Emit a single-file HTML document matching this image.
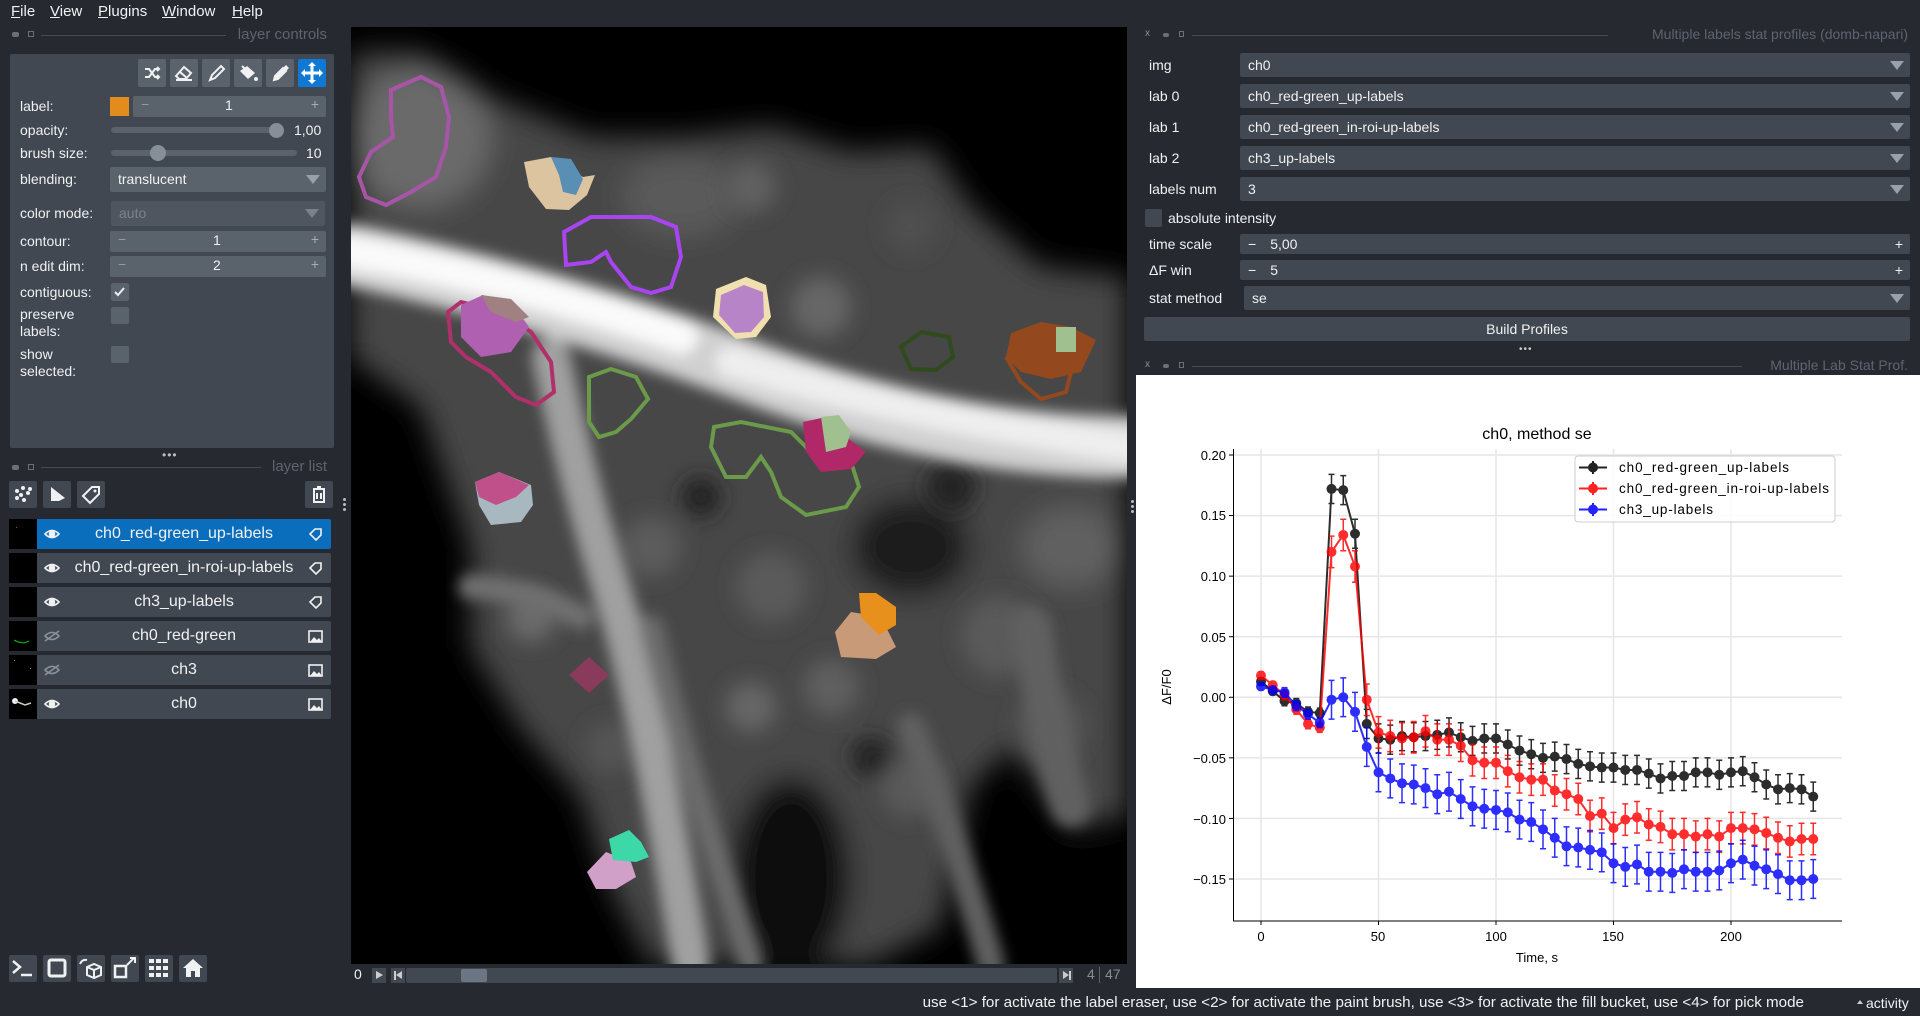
<!DOCTYPE html>
<html><head><meta charset="utf-8">
<style>
*{margin:0;padding:0;box-sizing:border-box}
body{width:1920px;height:1016px;background:#262930;font-family:"Liberation Sans",sans-serif;color:#f0f1f2;position:relative;overflow:hidden;font-size:14px}
.a{position:absolute}
.menu span{position:absolute;top:3px;font-size:15px}
.menu u{text-decoration:underline}
.ttl{position:absolute;font-size:14px;color:#5d6470;white-space:nowrap}
.ln{position:absolute;height:1px;background:#454b55}
.lbl{position:absolute;left:20px;font-size:14px;line-height:17px}
.w{position:absolute;background:#5a626c;border-radius:2px}
.tb{position:absolute;top:59px;width:28px;height:28px;background:#5a626c;border-radius:2px}
.row{position:absolute;left:37px;width:294px;height:30px;background:#414851;border-radius:0 2px 2px 0;font-size:16px;text-align:center;line-height:30px}
.th{position:absolute;left:9px;width:28px;height:30px;background:#000}
.bb{position:absolute;width:28px;height:27px;background:#414851;border-radius:2px}
.rl{position:absolute;left:1149px;font-size:14px}
.cb{position:absolute;left:1240px;width:670px;height:24px;background:#414851;border-radius:2px;font-size:14px;line-height:24px;padding-left:8px}
.arr{position:absolute;right:6px;top:8px;width:0;height:0;border-left:7px solid transparent;border-right:7px solid transparent;border-top:9px solid #9aa0a8}
</style></head><body>
<div class="menu">
<span style="left:11px"><u>F</u>ile</span><span style="left:50px"><u>V</u>iew</span><span style="left:98px"><u>P</u>lugins</span><span style="left:162px"><u>W</u>indow</span><span style="left:232px"><u>H</u>elp</span>
</div>
<div class="a" style="left:12px;top:32px;width:7px;height:5px;background:#6a707a;border-radius:2px"></div>
<div class="a" style="left:28px;top:31px;width:6px;height:6px;border:1px solid #6a707a"></div>
<div class="ln" style="left:41px;top:35px;width:185px"></div>
<div class="ttl" style="right:1593px;top:26px;font-size:15px">layer controls</div>
<div class="a" style="left:10px;top:54px;width:324px;height:394px;background:#414851;border-radius:2px"></div>
<div class="tb" style="left:138px"><svg width="28" height="28"><path d="M7 10h4l6 8h4M7 18h4l6-8h4M19 8l2 2-2 2M19 16l2 2-2 2" stroke="#f0f1f2" stroke-width="2" fill="none"/></svg></div>
<div class="tb" style="left:170px"><svg width="28" height="28"><path d="M6 17l8-9 7 6-5 6H9z" stroke="#f0f1f2" stroke-width="2" fill="none"/><path d="M6 21h16" stroke="#f0f1f2" stroke-width="2"/><path d="M10 13l7 6" stroke="#f0f1f2" stroke-width="2"/></svg></div>
<div class="tb" style="left:202px"><svg width="28" height="28"><path d="M8 21l2-5 9-9 3 3-9 9z" stroke="#f0f1f2" stroke-width="2" fill="none"/></svg></div>
<div class="tb" style="left:234px"><svg width="28" height="28"><path d="M6 12l7-5 8 7-7 6z" fill="#f0f1f2"/><path d="M8 7l5 5" stroke="#f0f1f2" stroke-width="2"/><circle cx="22" cy="20" r="2" fill="#f0f1f2"/></svg></div>
<div class="tb" style="left:266px"><svg width="28" height="28"><path d="M8 21l1-4 8-8 3 3-8 8z" stroke="#f0f1f2" stroke-width="2" fill="#f0f1f2"/><path d="M17 9l3-3 3 3-3 3" fill="#f0f1f2"/></svg></div>
<div class="tb" style="left:298px;background:#0f78d4"><svg width="28" height="28"><path d="M14 5v18M5 14h18" stroke="#fff" stroke-width="3"/><path d="M14 3l-4 4h8zM14 25l-4-4h8zM3 14l4-4v8zM25 14l-4-4v8z" fill="#fff"/></svg></div>
<div class="lbl" style="top:98px">label:</div>
<div class="a" style="left:110px;top:97px;width:19px;height:19px;background:#e38b1d"></div>
<div class="w" style="left:133px;top:96px;width:193px;height:21px"><span class="a" style="left:8px;top:0;color:#99a">−</span><span class="a" style="left:92px;top:1px">1</span><span class="a" style="right:7px;top:0;color:#aab">+</span></div>
<div class="lbl" style="top:122px">opacity:</div>
<div class="a" style="left:111px;top:127px;width:172px;height:6px;background:#5a626c;border-radius:3px"></div>
<div class="a" style="left:269px;top:123px;width:15px;height:15px;background:#868e98;border-radius:50%"></div>
<div class="a" style="left:294px;top:122px;font-size:14px">1,00</div>
<div class="lbl" style="top:145px">brush size:</div>
<div class="a" style="left:111px;top:150px;width:186px;height:6px;background:#5a626c;border-radius:3px"></div>
<div class="a" style="left:150px;top:145px;width:16px;height:16px;background:#868e98;border-radius:50%"></div>
<div class="a" style="left:306px;top:145px">10</div>
<div class="lbl" style="top:171px">blending:</div>
<div class="w" style="left:110px;top:167px;width:216px;height:25px;font-size:14px;line-height:25px;padding-left:8px">translucent<div class="arr"></div></div>
<div class="lbl" style="top:205px">color mode:</div>
<div class="w" style="left:111px;top:201px;width:214px;height:25px;background:#4f565f;color:#7b828b;line-height:25px;padding-left:8px">auto<div class="arr" style="border-top-color:#7b828b"></div></div>
<div class="lbl" style="top:233px">contour:</div>
<div class="w" style="left:110px;top:231px;width:216px;height:21px"><span class="a" style="left:8px;color:#99a">−</span><span class="a" style="left:103px;top:1px">1</span><span class="a" style="right:7px;color:#aab">+</span></div>
<div class="lbl" style="top:258px">n edit dim:</div>
<div class="w" style="left:110px;top:256px;width:216px;height:21px"><span class="a" style="left:8px;color:#99a">−</span><span class="a" style="left:103px;top:1px">2</span><span class="a" style="right:7px;color:#aab">+</span></div>
<div class="lbl" style="top:284px">contiguous:</div>
<div class="w" style="left:111px;top:283px;width:18px;height:18px"><svg width="18" height="18"><path d="M4 9l3 3 6-7" stroke="#eee" stroke-width="2" fill="none"/></svg></div>
<div class="lbl" style="top:306px">preserve<br>labels:</div>
<div class="w" style="left:111px;top:307px;width:18px;height:17px"></div>
<div class="lbl" style="top:346px">show<br>selected:</div>
<div class="w" style="left:111px;top:346px;width:18px;height:17px"></div>
<div class="a" style="left:162px;top:448px;color:#bbb;font-size:12px;letter-spacing:1px">•••</div>
<div class="a" style="left:12px;top:465px;width:7px;height:5px;background:#6a707a;border-radius:2px"></div>
<div class="a" style="left:28px;top:464px;width:6px;height:6px;border:1px solid #6a707a"></div>
<div class="ln" style="left:41px;top:467px;width:220px"></div>
<div class="ttl" style="right:1593px;top:458px;font-size:15px">layer list</div>
<div class="bb" style="left:9px;top:481px"><svg width="28" height="27"><g fill="#f0f1f2"><circle cx="8" cy="10" r="2"/><circle cx="14" cy="7" r="2"/><circle cx="19" cy="12" r="2"/><circle cx="12" cy="14" r="2"/><circle cx="8" cy="17" r="2"/><circle cx="15" cy="19" r="2"/><circle cx="21" cy="8" r="2"/></g></svg></div>
<div class="bb" style="left:43px;top:481px"><svg width="28" height="27"><path d="M8 6l14 11-6 3H8z" fill="#f0f1f2"/></svg></div>
<div class="bb" style="left:77px;top:481px"><svg width="28" height="27"><path d="M6 15l9-9h7v7l-9 9z" stroke="#f0f1f2" stroke-width="2" fill="none"/><circle cx="18" cy="10" r="1.5" fill="#f0f1f2"/></svg></div>
<div class="bb" style="left:305px;top:481px"><svg width="28" height="27"><path d="M8 8h12M12 6h4M9 9v12h10V9M12 12v6M16 12v6" stroke="#f0f1f2" stroke-width="2" fill="none"/></svg></div>
<div class="a" style="left:343px;top:498px;width:3px;height:3px;background:#bbb;border-radius:50%;box-shadow:0 5px 0 #bbb,0 10px 0 #bbb"></div>

<div class="th" style="top:519px"></div><div class="row" style="top:519px;background:#0a6ebd">ch0_red-green_up-labels</div>
<div class="th" style="top:553px"></div><div class="row" style="top:553px">ch0_red-green_in-roi-up-labels</div>
<div class="th" style="top:587px"></div><div class="row" style="top:587px">ch3_up-labels</div>
<div class="th" style="top:621px"></div><div class="row" style="top:621px">ch0_red-green</div>
<div class="th" style="top:655px"></div><div class="row" style="top:655px">ch3</div>
<div class="th" style="top:689px"></div><div class="row" style="top:689px">ch0</div>
<svg class="a" style="left:0;top:0" width="340" height="720">
<g fill="none" stroke-width="1.6">
<g stroke="#f0f1f2"><path d="M45 534q7-7 14 0q-7 7-14 0z"/><circle cx="52" cy="534" r="2.5" fill="#f0f1f2"/>
<path d="M45 568q7-7 14 0q-7 7-14 0z"/><circle cx="52" cy="568" r="2.5" fill="#f0f1f2"/>
<path d="M45 602q7-7 14 0q-7 7-14 0z"/><circle cx="52" cy="602" r="2.5" fill="#f0f1f2"/>
<path d="M45 704q7-7 14 0q-7 7-14 0z"/><circle cx="52" cy="704" r="2.5" fill="#f0f1f2"/></g>
<g stroke="#8a9098"><path d="M45 636q7-7 14 0q-7 7-14 0zM45 641l14-10"/><path d="M45 670q7-7 14 0q-7 7-14 0zM45 675l14-10"/></g>
<g stroke="#f0f1f2"><path d="M310 534l5-5h6v6l-5 5z"/><path d="M310 568l5-5h6v6l-5 5z"/><path d="M310 602l5-5h6v6l-5 5z"/>
<rect x="309" y="631" width="13" height="11"/><rect x="309" y="665" width="13" height="11"/><rect x="309" y="699" width="13" height="11"/></g>
</g>
<g fill="#f0f1f2"><path d="M310 642l4-5 3 3 2-2 3 4z"/><path d="M310 676l4-5 3 3 2-2 3 4z"/><path d="M310 710l4-5 3 3 2-2 3 4z"/></g>
<rect x="16" y="527" width="1" height="1" fill="#c33"/>
<path d="M14 640l4 2 6 1 5-2" stroke="#0c0" stroke-width="1" fill="none"/>
<g fill="#777"><rect x="14" y="660" width="1" height="1"/><rect x="30" y="668" width="1" height="1"/></g>
<circle cx="15" cy="701" r="3" fill="#eee"/><path d="M15 701l10 4 6-2" stroke="#ccc" stroke-width="1.5" fill="none"/>
</svg>
<div class="bb" style="left:9px;top:955px"><svg width="28" height="27"><path d="M4 6l7 6-7 6M12 20h11" stroke="#f0f1f2" stroke-width="2.5" fill="none"/></svg></div>
<div class="bb" style="left:43px;top:955px"><svg width="28" height="27"><rect x="6" y="5" width="16" height="16" rx="2" stroke="#f0f1f2" stroke-width="3" fill="none"/></svg></div>
<div class="bb" style="left:77px;top:955px"><svg width="28" height="27"><path d="M10 12l7-3 7 3v8l-7 3-7-3z M10 12l7 3 7-3M17 15v8" stroke="#f0f1f2" stroke-width="2" fill="none"/><path d="M3 9q2-5 7-4" stroke="#f0f1f2" stroke-width="2" fill="none"/></svg></div>
<div class="bb" style="left:111px;top:955px"><svg width="28" height="27"><rect x="4" y="11" width="11" height="11" stroke="#f0f1f2" stroke-width="2.5" fill="none"/><path d="M16 10l7-7M19 3h5v5" stroke="#f0f1f2" stroke-width="2" fill="none"/></svg></div>
<div class="bb" style="left:145px;top:955px"><svg width="28" height="27"><g fill="#f0f1f2"><rect x="4" y="4" width="5" height="4"/><rect x="11" y="4" width="5" height="4"/><rect x="18" y="4" width="5" height="4"/><rect x="4" y="11" width="5" height="4"/><rect x="11" y="11" width="5" height="4"/><rect x="18" y="11" width="5" height="4"/><rect x="4" y="18" width="5" height="4"/><rect x="11" y="18" width="5" height="4"/><rect x="18" y="18" width="5" height="4"/></g></svg></div>
<div class="bb" style="left:179px;top:955px"><svg width="28" height="27"><path d="M14 4l10 9h-3v9h-5v-6h-4v6H7v-9H4z" fill="#f0f1f2"/></svg></div>

<div class="a" style="left:351px;top:27px;width:776px;height:937px;background:#000;overflow:hidden">
<svg width="776" height="937" viewBox="0 0 776 937">
<defs><filter id="b" filterUnits="userSpaceOnUse" x="-100" y="-100" width="976" height="1137"><feGaussianBlur stdDeviation="14"/></filter>
<filter id="s" filterUnits="userSpaceOnUse" x="-100" y="-100" width="976" height="1137"><feGaussianBlur stdDeviation="7"/></filter>
<filter id="m" filterUnits="userSpaceOnUse" x="-100" y="-100" width="976" height="1137"><feGaussianBlur stdDeviation="10"/></filter></defs>
<g filter="url(#b)">
<polygon fill="#464646" points="0,25 70,25 140,70 240,110 330,110 420,100 500,125 580,120 620,180 690,240 776,250 776,790 720,800 660,720 620,760 590,900 520,937 300,937 260,860 230,770 170,700 120,620 120,520 70,380 0,330"/>
<ellipse cx="560" cy="520" rx="60" ry="50" fill="#1c1c1c"/>
<ellipse cx="440" cy="850" rx="60" ry="100" fill="#0a0a0a"/>
<ellipse cx="720" cy="890" rx="80" ry="60" fill="#000"/>
<ellipse cx="70" cy="110" rx="70" ry="70" fill="#6a6a6a"/>
<ellipse cx="330" cy="170" rx="60" ry="40" fill="#5a5a5a"/>
<ellipse cx="720" cy="520" rx="50" ry="40" fill="#606060"/>
</g>
<g filter="url(#m)">
<circle cx="180" cy="590" r="25" fill="#6a6a6a"/><circle cx="300" cy="520" r="30" fill="#5c5c5c"/>
<circle cx="420" cy="560" r="35" fill="#5a5a5a"/><circle cx="480" cy="660" r="28" fill="#5e5e5e"/>
<circle cx="650" cy="610" r="40" fill="#5a5a5a"/><circle cx="700" cy="700" r="35" fill="#555"/>
<circle cx="560" cy="760" r="30" fill="#5a5a5a"/><circle cx="400" cy="680" r="25" fill="#666"/>
<circle cx="260" cy="720" r="25" fill="#555"/><circle cx="470" cy="280" r="30" fill="#666"/>
<circle cx="560" cy="200" r="25" fill="#505050"/><circle cx="400" cy="160" r="25" fill="#606060"/>
<circle cx="350" cy="470" r="20" fill="#222"/><circle cx="600" cy="460" r="25" fill="#202020"/>
<circle cx="520" cy="730" r="20" fill="#222"/>
</g>
<g filter="url(#s)" fill="none" stroke-linecap="round">
<path d="M0 228 Q200 270 400 345 T776 420" stroke="#d0d0d0" stroke-width="62"/>
<path d="M0 225 Q150 250 330 310" stroke="#fafafa" stroke-width="34"/>
<path d="M380 335 Q560 390 776 420" stroke="#eeeeee" stroke-width="32"/>
<path d="M200 330 Q225 450 260 560 T340 937" stroke="#a0a0a0" stroke-width="38"/>
<path d="M300 600 Q340 760 400 937" stroke="#6c6c6c" stroke-width="24"/>
<path d="M120 560 Q170 560 230 590" stroke="#707070" stroke-width="25"/>
<path d="M560 700 Q600 800 640 937" stroke="#606060" stroke-width="28"/>
<path d="M680 600 Q700 720 720 780" stroke="#606060" stroke-width="40"/>
</g>
<g fill="none" stroke-width="4">
<path d="M40 63 L70 50 L90 60 L98 90 L95 120 L85 150 L60 165 L35 178 L15 170 L8 150 L20 125 L42 110 L40 90 Z" stroke="#a855a8"/>
<path d="M213 205 L240 190 L300 190 L325 200 L330 230 L320 260 L300 266 L280 260 L260 235 L255 225 L240 235 L215 238 Z" stroke="#a845f0"/>
<path d="M238 350 L260 342 L285 350 L297 372 L280 392 L265 405 L248 410 L238 395 Z" stroke="#6a9a4a"/>
<path d="M550 320 L570 305 L598 310 L602 330 L585 343 L560 342 Z" stroke="#2f4a1c"/>
<path d="M363 400 L390 395 L440 405 L455 420 L470 440 L500 435 L508 460 L495 480 L455 488 L430 470 L420 445 L410 430 L395 450 L375 450 L360 420 Z" stroke="#6a9a4a"/>
<path d="M97 285 L110 275 L150 285 L180 305 L200 335 L203 365 L185 378 L165 370 L140 345 L115 330 L100 315 Z" stroke="#b0306a"/>
<path d="M655 330 L670 355 L690 372 L715 365 L720 345" stroke="#94481e"/>
</g>
<path d="M173 135 L200 130 L215 140 L232 150 L244 148 L236 168 L218 183 L195 182 L178 160 Z" fill="#dcc4a0"/>
<path d="M200 130 L220 132 L232 152 L225 168 L212 165 L208 148 Z" fill="#5a8fb5"/>
<path d="M365 262 L395 250 L415 258 L420 290 L405 310 L385 312 L362 290 Z" fill="#f0e0b0"/>
<path d="M370 268 L393 258 L412 265 L413 290 L400 305 L384 306 L368 288 Z" fill="#b884c8"/>
<path d="M110 278 L132 268 L165 282 L178 300 L160 325 L130 330 L110 310 Z" fill="#b060b0"/>
<path d="M130 268 L160 272 L178 290 L165 295 L140 285 Z" fill="#a08080"/>
<path d="M660 306 L690 295 L720 300 L745 313 L730 345 L700 352 L670 345 L655 330 Z" fill="#94481e"/>
<rect x="705" y="300" width="20" height="25" fill="#a0c090"/>
<path d="M452 395 L475 390 L495 410 L515 425 L500 442 L470 445 L455 425 Z" fill="#b02868"/>
<path d="M470 390 L488 388 L500 405 L495 420 L475 425 Z" fill="#a0c090"/>
<path d="M124 455 L148 445 L180 458 L182 478 L170 495 L140 498 L128 478 Z" fill="#a8b8c0"/>
<path d="M124 455 L148 445 L178 458 L165 470 L145 478 L128 470 Z" fill="#c0508a"/>
<path d="M484 605 L500 585 L530 590 L545 620 L525 632 L490 630 Z" fill="#c89a78"/>
<path d="M508 566 L525 566 L545 580 L545 598 L528 608 L510 590 Z" fill="#e8901c"/>
<path d="M218 648 L238 630 L258 648 L238 666 Z" fill="#8a3a5a"/>
<path d="M236 845 L255 825 L280 835 L285 850 L265 862 L245 862 Z" fill="#d0a0c8"/>
<path d="M258 812 L278 803 L290 815 L298 830 L285 835 L262 833 Z" fill="#3cd8a8"/>
</svg>
</div>
<div class="a" style="left:354px;top:966px;font-size:14px">0</div>
<div class="a" style="left:372px;top:968px;width:14px;height:15px;background:#414851"><div class="a" style="left:4px;top:3px;border-left:7px solid #ccc;border-top:4.5px solid transparent;border-bottom:4.5px solid transparent"></div></div>
<div class="a" style="left:391px;top:968px;width:14px;height:15px;background:#414851"><div class="a" style="left:3px;top:3px;width:2px;height:9px;background:#ccc"></div><div class="a" style="left:5px;top:3px;border-right:6px solid #ccc;border-top:4.5px solid transparent;border-bottom:4.5px solid transparent"></div></div>
<div class="a" style="left:406px;top:968px;width:651px;height:15px;background:#414851;border-radius:2px"></div>
<div class="a" style="left:461px;top:969px;width:26px;height:13px;background:#6b7583;border-radius:2px"></div>
<div class="a" style="left:1059px;top:968px;width:14px;height:15px;background:#414851"><div class="a" style="left:4px;top:3px;border-left:6px solid #ccc;border-top:4.5px solid transparent;border-bottom:4.5px solid transparent"></div><div class="a" style="left:10px;top:3px;width:2px;height:9px;background:#ccc"></div></div>
<div class="a" style="left:1087px;top:966px;color:#868e98">4</div>
<div class="a" style="left:1099px;top:967px;width:1px;height:16px;background:#5a626c"></div>
<div class="a" style="left:1105px;top:966px;color:#868e98">47</div>
<div class="a" style="left:1131px;top:500px;width:3px;height:3px;background:#bbb;border-radius:50%;box-shadow:0 5px 0 #bbb,0 10px 0 #bbb"></div>
<div class="a" style="left:1145px;top:28px;font-size:10px;color:#8a9098">x</div>
<div class="a" style="left:1163px;top:33px;width:6px;height:4px;background:#6a707a;border-radius:2px"></div>
<div class="a" style="left:1179px;top:31px;width:5px;height:6px;border:1px solid #6a707a"></div>
<div class="ln" style="left:1192px;top:35px;width:416px"></div>
<div class="ttl" style="right:12px;top:26px;font-size:14px">Multiple labels stat profiles (domb-napari)</div>
<div class="rl" style="top:57px">img</div><div class="cb" style="top:53px">ch0<div class="arr"></div></div>
<div class="rl" style="top:88px">lab 0</div><div class="cb" style="top:84px">ch0_red-green_up-labels<div class="arr"></div></div>
<div class="rl" style="top:119px">lab 1</div><div class="cb" style="top:115px">ch0_red-green_in-roi-up-labels<div class="arr"></div></div>
<div class="rl" style="top:150px">lab 2</div><div class="cb" style="top:146px">ch3_up-labels<div class="arr"></div></div>
<div class="rl" style="top:181px">labels num</div><div class="cb" style="top:177px">3<div class="arr"></div></div>
<div class="a" style="left:1145px;top:209px;width:17px;height:18px;background:#414851;border-radius:2px"></div>
<div class="a" style="left:1168px;top:210px">absolute intensity</div>
<div class="rl" style="top:236px">time scale</div><div class="cb" style="top:234px;height:20px;line-height:20px">−<span style="margin-left:14px">5,00</span><span class="a" style="right:7px">+</span></div>
<div class="rl" style="top:262px">ΔF win</div><div class="cb" style="top:260px;height:20px;line-height:20px">−<span style="margin-left:14px">5</span><span class="a" style="right:7px">+</span></div>
<div class="rl" style="top:290px">stat method</div><div class="cb" style="top:286px;left:1244px;width:666px">se<div class="arr"></div></div>
<div class="a" style="left:1144px;top:317px;width:766px;height:24px;background:#414851;border-radius:2px;text-align:center;line-height:24px">Build Profiles</div>
<div class="a" style="left:1519px;top:344px;color:#ccc;font-size:10px;letter-spacing:1px">•••</div>
<div class="a" style="left:1145px;top:359px;font-size:10px;color:#8a9098">x</div>
<div class="a" style="left:1163px;top:364px;width:6px;height:4px;background:#6a707a;border-radius:2px"></div>
<div class="a" style="left:1179px;top:362px;width:5px;height:6px;border:1px solid #6a707a"></div>
<div class="ln" style="left:1192px;top:366px;width:550px"></div>
<div class="ttl" style="right:12px;top:357px;font-size:14px">Multiple Lab Stat Prof.</div>
<svg class="a" style="left:1136px;top:375px;background:#fff" width="784" height="613" font-family="Liberation Sans, sans-serif">
<g id="grid" stroke="#e6e6e6" stroke-width="1.5"></g>
<g id="data"></g>
<path d="M97.5 74V546H706" stroke="#000" fill="none" stroke-width="1"/>
<g font-size="13" text-anchor="end" fill="#000">
<text x="90" y="85">0.20</text><text x="90" y="145">0.15</text><text x="90" y="206">0.10</text><text x="90" y="267">0.05</text><text x="90" y="327">0.00</text><text x="90" y="388">−0.05</text><text x="90" y="449">−0.10</text><text x="90" y="509">−0.15</text>
</g>
<g font-size="13" text-anchor="middle" fill="#000">
<text x="125" y="566">0</text><text x="242" y="566">50</text><text x="360" y="566">100</text><text x="477" y="566">150</text><text x="595" y="566">200</text>
<text x="401" y="587">Time, s</text>
<text x="401" y="64" font-size="16">ch0, method se</text>
<text transform="translate(35,312) rotate(-90)" font-size="13">ΔF/F0</text>
</g>
<rect x="439" y="81" width="260" height="66" rx="3" fill="#fff" fill-opacity="0.85" stroke="#ccc"/>
<g font-size="13.5" fill="#000">
<text x="483" y="97" textLength="170">ch0_red-green_up-labels</text>
<text x="483" y="118" textLength="210">ch0_red-green_in-roi-up-labels</text>
<text x="483" y="139" textLength="94">ch3_up-labels</text>
</g>
<g stroke-width="2">
<path d="M443 92.5h28M457 86v13" stroke="#222"/><circle cx="457" cy="92.5" r="5" fill="#222"/>
<path d="M443 113.5h28M457 107v13" stroke="#f22"/><circle cx="457" cy="113.5" r="5" fill="#f22"/>
<path d="M443 134.5h28M457 128v13" stroke="#22f"/><circle cx="457" cy="134.5" r="5" fill="#22f"/>
</g>
</svg>
<div class="a" style="right:116px;top:994px;font-size:15.2px;white-space:nowrap">use &lt;1&gt; for activate the label eraser, use &lt;2&gt; for activate the paint brush, use &lt;3&gt; for activate the fill bucket, use &lt;4&gt; for pick mode</div>
<div class="a" style="left:1857px;top:1000px;border-left:3px solid transparent;border-right:3px solid transparent;border-bottom:4px solid #ccc"></div>
<div class="a" style="left:1866px;top:995px;font-size:14px">activity</div>
<script>
function X(t){return 125+2.35*t}function Y(v){return 80+(0.2-v)/0.05*60.57}
var g=document.getElementById('grid'),h='';
[0,0.05,0.1,0.15,0.2,-0.05,-0.1,-0.15].forEach(function(v){h+='<line x1="97.5" x2="706" y1="'+Y(v)+'" y2="'+Y(v)+'"/><line x1="93" x2="97.5" y1="'+Y(v)+'" y2="'+Y(v)+'" stroke="#000" stroke-width="1"/>'});
[0,50,100,150,200].forEach(function(t){h+='<line y1="74" y2="546" x1="'+X(t)+'" x2="'+X(t)+'"/><line y1="546" y2="550" x1="'+X(t)+'" x2="'+X(t)+'" stroke="#000" stroke-width="1"/>'});
g.innerHTML=h;
var K=[0.013,0.005,-0.003,-0.005,-0.012,-0.013,0.172,0.171,0.135,-0.022,-0.034,-0.035,-0.032,-0.033,-0.032,-0.031,-0.029,-0.033,-0.036,-0.034,-0.034,-0.039,-0.044,-0.047,-0.05,-0.049,-0.051,-0.055,-0.057,-0.058,-0.058,-0.06,-0.06,-0.063,-0.067,-0.065,-0.065,-0.062,-0.062,-0.064,-0.062,-0.061,-0.066,-0.072,-0.076,-0.075,-0.076,-0.082];
var R=[0.018,0.01,0.002,-0.01,-0.022,-0.025,0.12,0.134,0.108,-0.002,-0.029,-0.032,-0.034,-0.033,-0.028,-0.035,-0.035,-0.04,-0.052,-0.054,-0.054,-0.061,-0.066,-0.068,-0.068,-0.077,-0.08,-0.084,-0.098,-0.096,-0.108,-0.101,-0.099,-0.105,-0.107,-0.113,-0.113,-0.115,-0.113,-0.115,-0.108,-0.108,-0.109,-0.112,-0.116,-0.119,-0.117,-0.117];
var B=[0.009,0.006,0.004,-0.007,-0.014,-0.021,-0.002,0,-0.012,-0.041,-0.062,-0.067,-0.071,-0.072,-0.075,-0.08,-0.078,-0.084,-0.09,-0.092,-0.093,-0.095,-0.101,-0.103,-0.109,-0.116,-0.123,-0.124,-0.126,-0.128,-0.137,-0.14,-0.138,-0.144,-0.144,-0.145,-0.142,-0.144,-0.144,-0.143,-0.137,-0.134,-0.139,-0.142,-0.146,-0.151,-0.151,-0.15];
function ser(d,c,e){var s='<g opacity="0.82"><polyline fill="none" stroke="'+c+'" stroke-width="2" points="';
d.forEach(function(v,i){s+=X(i*5)+','+Y(v)+' '});s+='"/>';
d.forEach(function(v,i){var x=X(i*5),er=(i<2?0.003:i<6?0.004:e);var y1=Y(v+er),y2=Y(v-er);
s+='<path d="M'+x+' '+y1+'V'+y2+'M'+(x-3)+' '+y1+'h6M'+(x-3)+' '+y2+'h6" stroke="'+c+'" stroke-width="1.5"/><circle cx="'+x+'" cy="'+Y(v)+'" r="5" fill="'+c+'"/>'});
return s+'</g>'}
document.getElementById('data').innerHTML=ser(K,'#000',0.012)+ser(R,'#f00',0.013)+ser(B,'#00f',0.016);
</script>
</body></html>
